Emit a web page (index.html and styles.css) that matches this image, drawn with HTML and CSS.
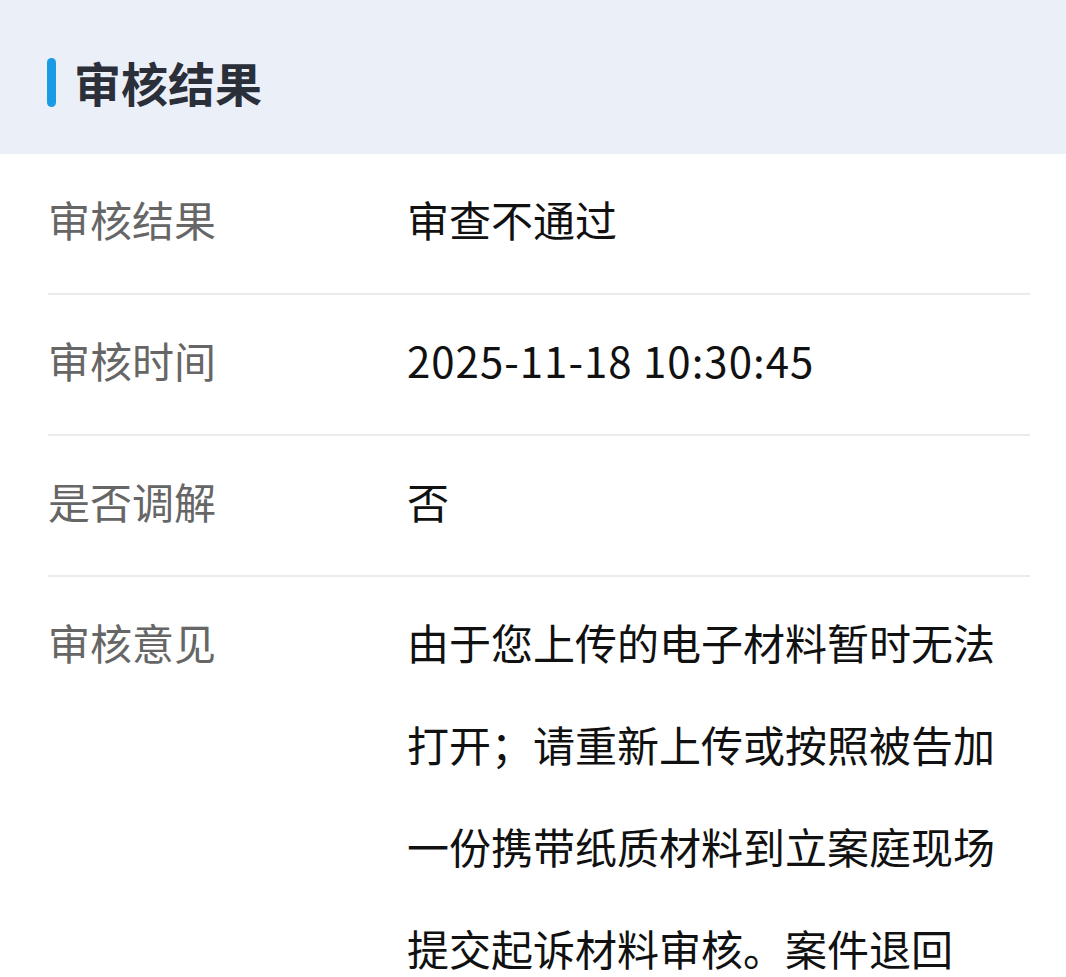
FILE: index.html
```html
<!DOCTYPE html>
<html lang="zh-CN">
<head>
<meta charset="utf-8">
<title>审核结果</title>
<link rel="stylesheet" href="styles.css">
</head>
<body>
<div class="page">
  <header class="section-head">
    <span class="bar"></span>
    <h1 class="title">审核结果</h1>
  </header>
  <div class="list">
    <div class="row">
      <div class="label">审核结果</div>
      <div class="value">审查不通过</div>
    </div>
    <div class="row">
      <div class="label">审核时间</div>
      <div class="value num">2025-11-18 10:30:45</div>
    </div>
    <div class="row">
      <div class="label">是否调解</div>
      <div class="value">否</div>
    </div>
    <div class="row last">
      <div class="label">审核意见</div>
      <div class="value">由于您上传的电子材料暂时无法打开；请重新上传或按照被告加一份携带纸质材料到立案庭现场提交起诉材料审核。案件退回</div>
    </div>
  </div>
</div>
</body>
</html>
```

FILE: styles.css
```css
* { box-sizing: border-box; }
html, body {
  margin: 0;
  padding: 0;
  background: #ffffff;
  font-family: "Noto Sans CJK SC", "Noto Sans", sans-serif;
}
.page {
  width: 1066px;
  height: 977px;
  overflow: hidden;
}
.section-head {
  height: 154px;
  background: #ebf0f8;
  display: flex;
  align-items: center;
  padding-left: 47px;
}
.bar {
  width: 9px;
  height: 49px;
  border-radius: 5px;
  background: #1a9be6;
  margin-right: 18px;
  margin-top: 11px;
}
.title {
  margin: 0;
  margin-top: 8px;
  font-size: 47px;
  font-weight: 700;
  color: #2b2f3a;
  letter-spacing: 0;
}
.list {
  margin: 0 36px 0 48px;
}
.row {
  display: flex;
  padding: 14px 0 23px;
  border-bottom: 2px solid #ebebeb;
  font-size: 42px;
  line-height: 102px;
}
.row.last { border-bottom: none; }
.label {
  width: 359px;
  flex: none;
  color: #666666;
  padding-left: 0;
}
.value {
  flex: 1;
  color: #111111;
  padding-right: 24px;
}
.value.num {
  letter-spacing: 1px;
}
```
